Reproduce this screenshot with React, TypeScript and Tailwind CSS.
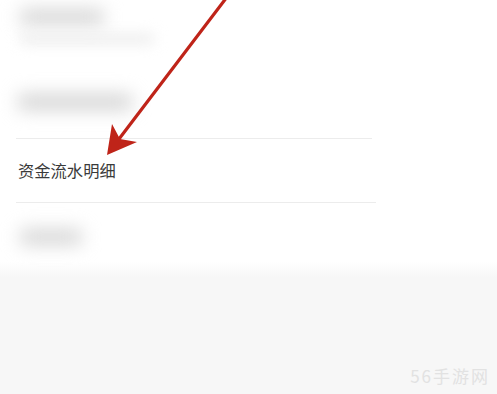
import React from "react";

export default function App() {
  return (
    <div
      className="relative w-[497px] h-[394px] overflow-hidden bg-[#f7f7f7]"
      style={{ fontFamily: '"Noto Sans CJK SC", "Noto Sans", sans-serif' }}
    >
      <div className="h-[262px] bg-white pl-4 flex flex-col">
        <div className="pt-[9px] pl-1">
          <div className="h-[16px] w-[84px] bg-[#d6d6d6] blur-[9px] rounded" />
          <div className="mt-[9px] h-[10px] w-[134px] bg-[#ececec] blur-[7px] rounded" />
        </div>
        <div className="mt-[50px] pl-[2px]">
          <div className="h-[16px] w-[114px] bg-[#d4d4d4] blur-[9px] rounded" />
        </div>
        <div className="mt-[28px] h-px w-[356px] bg-[#ececec]" />
        <div className="h-[63px] flex items-center pl-[2px] text-[16.3px] text-[#3a3a3a]">
          资金流水明细
        </div>
        <div className="h-px w-[360px] bg-[#ececec]" />
        <div className="mt-[26px] pl-1">
          <div className="h-[16px] w-[62px] bg-[#d6d6d6] blur-[9px] rounded" />
        </div>
      </div>
      <div className="h-[16px] bg-gradient-to-b from-white to-[#f7f7f7]" />
      <div
        className="absolute right-[7px] bottom-[6px] text-[17px] text-[#e2e2e2] tracking-[2px]"
        style={{ fontFamily: '"Noto Sans CJK SC", sans-serif' }}
      >
        56手游网
      </div>
      <svg
        className="absolute left-0 top-0 pointer-events-none"
        width="497"
        height="394"
        viewBox="0 0 497 394"
      >
        <line x1="227" y1="-3" x2="119" y2="139" stroke="#bf2419" strokeWidth="3.2" strokeLinecap="round" />
        <polygon points="107,155 112,124 120,139 137,142" fill="#bf2419" />
      </svg>
    </div>
  );
}
